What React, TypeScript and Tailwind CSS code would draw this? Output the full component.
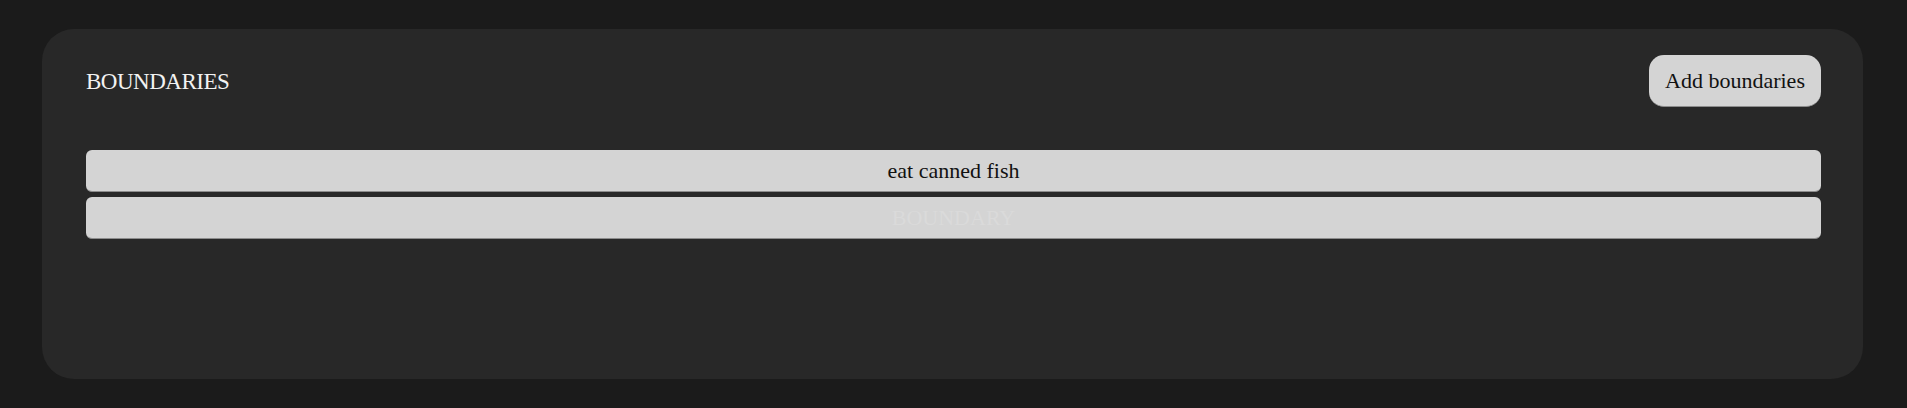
export default function App() {
  return (
    <div className="min-h-[408px] bg-[#1b1b1b] pt-[29px] pb-[29px] pl-[42px] pr-[44px] [font-family:'Liberation_Serif',serif]">
      <div className="h-[350px] rounded-[32px] bg-[#282828] pt-[26px] pl-[44px] pr-[42px]">
        {/* Header */}
        <div className="flex items-center justify-between">
          <h2 className="text-[23px] leading-none tracking-[-0.5px] text-[#f2f2f2]">BOUNDARIES</h2>
          <button className="h-[52px] w-[172px] rounded-[15px] border-b border-[#8c8c8c] bg-[#d4d4d4] text-[22px] text-[#111]">
            Add boundaries
          </button>
        </div>

        {/* Boundary list */}
        <div className="mt-[43px] flex flex-col gap-[5px]">
          <input
            defaultValue="eat canned fish"
            className="h-[42px] w-full rounded-[6px] border-b border-[#8c8c8c] bg-[#d4d4d4] text-center text-[22px] text-[#111] outline-none"
          />
          <input
            placeholder="BOUNDARY"
            className="h-[42px] w-full rounded-[6px] border-b border-[#8c8c8c] bg-[#d4d4d4] text-center text-[22px] text-[#111] outline-none placeholder:text-[#dadada]"
          />
        </div>
      </div>
    </div>
  );
}
